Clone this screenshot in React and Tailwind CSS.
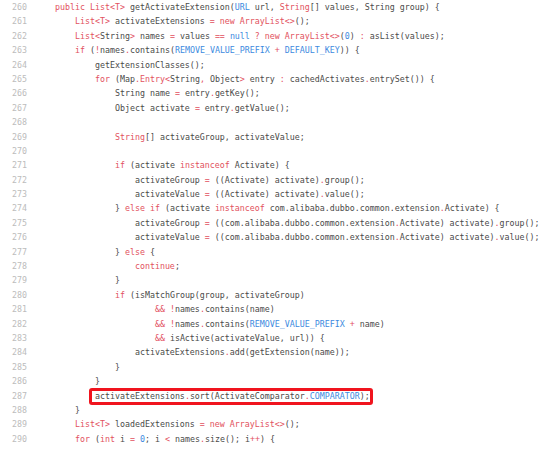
const RED = "text-[#e2515e]";
const BLUE = "text-[#3d8ae0]";

// ~...~ = keyword/operator (red), ^...^ = constant/literal (blue)
const lines = [
  "    ~public~ ~List<T>~ getActivateExtension(^URL^ url, ~String~[] values, String group) {",
  "        ~List<T>~ activateExtensions ~=~ ~new~ ~ArrayList<>~();",
  "        ~List<~String~>~ names ~=~ values ~==~ ^null^ ~?~ ~new~ ~ArrayList<>~(^0^) ~:~ asList(values);",
  "        ~if~ (~!~names~.~contains(^REMOVE_VALUE_PREFIX^ ~+~ ^DEFAULT_KEY^)) {",
  "            getExtensionClasses();",
  "            ~for~ (Map~.Entry<~String~,~ Object~>~ entry ~:~ cachedActivates~.~entrySet()) {",
  "                String name ~=~ entry~.~getKey();",
  "                Object activate ~=~ entry~.~getValue();",
  "",
  "                ~String~[] activateGroup, activateValue;",
  "",
  "                ~if~ (activate ~instanceof~ Activate) {",
  "                    activateGroup ~=~ ((Activate) activate)~.~group();",
  "                    activateValue ~=~ ((Activate) activate)~.~value();",
  "                } ~else~ ~if~ (activate ~instanceof~ com.alibaba.dubbo.common.extension~.~Activate) {",
  "                    activateGroup ~=~ ((com.alibaba.dubbo.common.extension~.~Activate) activate)~.~group();",
  "                    activateValue ~=~ ((com.alibaba.dubbo.common.extension~.~Activate) activate)~.~value();",
  "                } ~else~ {",
  "                    ~continue~;",
  "                }",
  "                ~if~ (isMatchGroup(group, activateGroup)",
  "                        ~&&~ ~!~names~.~contains(name)",
  "                        ~&&~ ~!~names~.~contains(^REMOVE_VALUE_PREFIX^ ~+~ name)",
  "                        ~&&~ isActive(activateValue, url)) {",
  "                    activateExtensions~.~add(getExtension(name));",
  "                }",
  "            }",
  "            activateExtensions~.~sort(ActivateComparator~.~^COMPARATOR^);",
  "        }",
  "        ~List<T>~ loadedExtensions ~=~ ~new~ ~ArrayList<>~();",
  "        ~for~ (~int~ i ~=~ ^0^; i ~<~ names~.~size(); i~++~) {",
];

const FIRST = 260;
const HIGHLIGHT = 287;

function Tokens({ src }) {
  const parts = src.split(/(~[^~]*~|\^[^^]*\^)/).filter(Boolean);
  return parts.map((p, i) => {
    if (p[0] === "~") return <span key={i} className={RED}>{p.slice(1, -1)}</span>;
    if (p[0] === "^") return <span key={i} className={BLUE}>{p.slice(1, -1)}</span>;
    return <span key={i}>{p}</span>;
  });
}

function CodeLine({ num, src }) {
  const indent = src.match(/^ */)[0];
  const body = src.slice(indent.length);
  return (
    <div className="flex h-[14.4px] leading-[14.4px]">
      <span className="w-[35px] shrink-0 pl-[12px] text-[#bcbcbc]">{num}</span>
      <span className="whitespace-pre text-[#4a4a4a]">
        {indent}
        {num === HIGHLIGHT ? (
          <span className="relative inline-block">
            <Tokens src={body} />
            <span className="absolute -left-[6px] -right-[3px] -top-[1px] -bottom-[2px] rounded-[3px] border-[3px] border-[#f0141e]" />
          </span>
        ) : (
          <Tokens src={body} />
        )}
      </span>
    </div>
  );
}

export default function App() {
  return (
    <div
      className="h-[450px] w-[554px] overflow-hidden bg-white text-[8.3px]"
      style={{ fontFamily: '"DejaVu Sans Mono", "Liberation Mono", monospace' }}
    >
      {lines.map((src, i) => (
        <CodeLine key={i} num={FIRST + i} src={src} />
      ))}
    </div>
  );
}
